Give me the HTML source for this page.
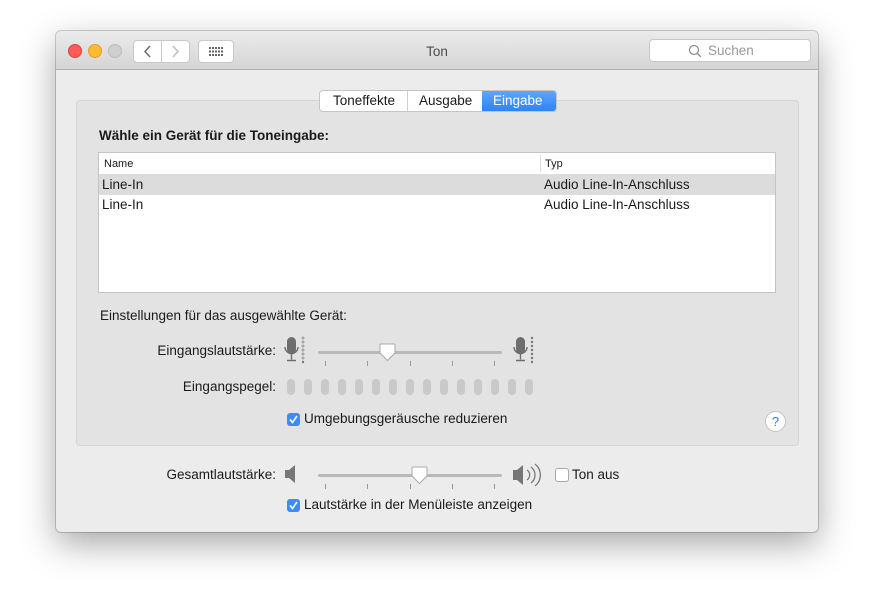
<!DOCTYPE html><html><head><style>
body{margin:0;width:874px;height:612px;background:#fff;font-family:"Liberation Sans",sans-serif;font-size:13.5px;color:#1a1a1a;position:relative;overflow:hidden}
.a{position:absolute}
.r{position:absolute;text-align:right;width:200px}
.win{left:56px;top:31px;width:762px;height:501px;background:#ececec;border-radius:5px;box-shadow:0 12px 35px rgba(0,0,0,.35),0 0 0 1px rgba(0,0,0,.18)}
.tb{left:0;top:0;width:762px;height:38px;background:linear-gradient(#ebebeb,#d5d5d5);border-bottom:1px solid #b1b1b1;border-radius:5px 5px 0 0}
.dot{width:12px;height:12px;border-radius:50%;top:13px}
.btn{background:#fff;border:1px solid #c8c8c8;border-radius:4px;height:21px;top:9px}
.group{left:20px;top:69px;width:721px;height:344px;background:#e3e3e3;border:1px solid #d5d5d5;border-radius:4px}
.pill{width:8px;height:16px;border-radius:4px;background:#c9c9c9;top:379px}
.track{height:3px;background:#b9b9b9;border-radius:2px}
.tick{width:1px;height:5px;background:#999}
.cb{width:13px;height:13px;border-radius:3px;background:#3d8cf5}
</style></head><body>
<div class="a win">
 <div class="a tb">
  <div class="a dot" style="left:12px;background:#fc5b57;border:0.5px solid #de4640"></div>
  <div class="a dot" style="left:32px;background:#fdbb2f;border:0.5px solid #de9f2a"></div>
  <div class="a dot" style="left:52px;background:#cfcfcf;border:0.5px solid #bcbcbc"></div>
  <div class="a btn" style="left:77px;width:27px;border-radius:4px 0 0 4px"><svg width="27" height="21"><path d="M16 5l-5 5.5 5 5.5" fill="none" stroke="#666" stroke-width="1.4"/></svg></div>
  <div class="a btn" style="left:105px;width:27px;border-radius:0 4px 4px 0"><svg width="27" height="21"><path d="M11 5l5 5.5-5 5.5" fill="none" stroke="#bbb" stroke-width="1.4"/></svg></div>
  <div class="a btn" style="left:142px;width:34px"><svg width="34" height="21"><g fill="#666"><rect x="10" y="6" width="2" height="2"/><rect x="13" y="6" width="2" height="2"/><rect x="16" y="6" width="2" height="2"/><rect x="19" y="6" width="2" height="2"/><rect x="22" y="6" width="2" height="2"/><rect x="10" y="9.5" width="2" height="2"/><rect x="13" y="9.5" width="2" height="2"/><rect x="16" y="9.5" width="2" height="2"/><rect x="19" y="9.5" width="2" height="2"/><rect x="22" y="9.5" width="2" height="2"/><rect x="10" y="13" width="2" height="2"/><rect x="13" y="13" width="2" height="2"/><rect x="16" y="13" width="2" height="2"/><rect x="19" y="13" width="2" height="2"/><rect x="22" y="13" width="2" height="2"/></g></svg></div>
  <div class="a" style="left:0;width:762px;top:13px;text-align:center;color:#4d4d4d">Ton</div>
  <div class="a btn" style="left:593px;width:160px;height:21px;top:8px;color:#999"><svg class="a" style="left:38px;top:4px" width="14" height="14"><circle cx="6" cy="6" r="4.5" fill="none" stroke="#888" stroke-width="1.2"/><path d="M9.3 9.3l3.5 3.5" stroke="#888" stroke-width="1.3"/></svg><span class="a" style="left:58px;top:3px">Suchen</span></div>
 </div>
 <div class="a group"></div>
 <div class="a" style="left:263px;top:59px;width:236px;height:20px;background:#fff;border:1px solid #c5c5c5;border-radius:4px;overflow:hidden">
  <span class="a" style="left:13px;top:2px">Toneffekte</span>
  <div class="a" style="left:87px;top:0;width:1px;height:20px;background:#d0d0d0"></div>
  <span class="a" style="left:99px;top:2px">Ausgabe</span>
  <div class="a" style="left:162px;top:0;width:74px;height:20px;background:linear-gradient(#5ea6fb,#2f83f6);color:#fff"><span class="a" style="left:11px;top:2px">Eingabe</span></div>
 </div>
 <div class="a" style="left:43px;top:97px;font-weight:bold">Wähle ein Gerät für die Toneingabe:</div>
 <div class="a" style="left:42px;top:121px;width:676px;height:139px;background:#fff;border:1px solid #c4c4c4">
  <div class="a" style="left:0;top:0;width:676px;height:21px;border-bottom:1px solid #dcdcdc;font-size:11px"><span class="a" style="left:5px;top:5px">Name</span><div class="a" style="left:441px;top:2px;width:1px;height:17px;background:#dcdcdc"></div><span class="a" style="left:446px;top:5px">Typ</span></div>
  <div class="a" style="left:0;top:22px;width:676px;height:20px;background:#dcdcdc"><span class="a" style="left:3px;top:2px">Line-In</span><span class="a" style="left:445px;top:2px">Audio Line-In-Anschluss</span></div>
  <div class="a" style="left:0;top:42px;width:676px;height:20px"><span class="a" style="left:3px;top:2px">Line-In</span><span class="a" style="left:445px;top:2px">Audio Line-In-Anschluss</span></div>
 </div>
</div>
<div class="a" style="left:100px;top:308px">Einstellungen für das ausgewählte Gerät:</div>
<div class="r" style="left:76px;top:343px">Eingangslautstärke:</div>
<div class="r" style="left:76px;top:379px">Eingangspegel:</div>
<svg class="a" style="left:282px;top:335px" width="260" height="32">
 <rect x="5" y="2" width="9" height="17" rx="4.5" fill="#6e6e6e"/><path d="M3 12a6.5 6.5 0 0 0 13 0M9.5 18.5v6M5 25.5h9" fill="none" stroke="#6e6e6e" stroke-width="1.4"/>
 <g fill="none" stroke="#8a8a8a" stroke-width=".8"><circle cx="21" cy="3" r="1"/><circle cx="21" cy="7" r="1"/><circle cx="21" cy="11" r="1"/><circle cx="21" cy="15" r="1"/><circle cx="21" cy="19" r="1"/><circle cx="21" cy="23" r="1"/></g><circle cx="21" cy="27" r="1.2" fill="#777"/>
 <rect x="234" y="2" width="9" height="17" rx="4.5" fill="#6e6e6e"/><path d="M232 12a6.5 6.5 0 0 0 13 0M238.5 18.5v6M234 25.5h9" fill="none" stroke="#6e6e6e" stroke-width="1.4"/>
 <g fill="#777"><circle cx="250" cy="3" r="1.2"/><circle cx="250" cy="7" r="1.2"/><circle cx="250" cy="11" r="1.2"/><circle cx="250" cy="15" r="1.2"/><circle cx="250" cy="19" r="1.2"/><circle cx="250" cy="23" r="1.2"/><circle cx="250" cy="27" r="1.2"/></g>
</svg>
<div class="a track" style="left:318px;top:351px;width:184px"></div>
<div class="a tick" style="left:325px;top:361px"></div><div class="a tick" style="left:367px;top:361px"></div><div class="a tick" style="left:410px;top:361px"></div><div class="a tick" style="left:452px;top:361px"></div><div class="a tick" style="left:494px;top:361px"></div>
<svg class="a" style="left:379px;top:343px" width="17" height="19"><path d="M2 1h13a1 1 0 0 1 1 1v8l-7.5 7.5L1 10V2a1 1 0 0 1 1-1z" fill="#fff" stroke="#aaa"/></svg>
<div class="a pill" style="left:287px"></div><div class="a pill" style="left:304px"></div><div class="a pill" style="left:321px"></div><div class="a pill" style="left:338px"></div><div class="a pill" style="left:355px"></div><div class="a pill" style="left:372px"></div><div class="a pill" style="left:389px"></div><div class="a pill" style="left:406px"></div><div class="a pill" style="left:423px"></div><div class="a pill" style="left:440px"></div><div class="a pill" style="left:457px"></div><div class="a pill" style="left:474px"></div><div class="a pill" style="left:491px"></div><div class="a pill" style="left:508px"></div><div class="a pill" style="left:525px"></div>
<div class="a cb" style="left:287px;top:413px"><svg width="13" height="13"><path d="M3 6.5l2.5 3L10 3" fill="none" stroke="#fff" stroke-width="1.6"/></svg></div>
<div class="a" style="left:304px;top:411px">Umgebungsgeräusche reduzieren</div>
<div class="a" style="left:765px;top:411px;width:19px;height:19px;border-radius:50%;background:#fff;border:1px solid #c3c3c3;color:#3478f6;text-align:center;line-height:19px;font-size:13px">?</div>
<div class="r" style="left:76px;top:467px">Gesamtlautstärke:</div>
<svg class="a" style="left:284px;top:463px" width="14" height="22"><path d="M1 7h4l6-5v18l-6-5H1z" fill="#777"/></svg>
<div class="a track" style="left:318px;top:474px;width:184px"></div>
<div class="a tick" style="left:325px;top:484px"></div><div class="a tick" style="left:367px;top:484px"></div><div class="a tick" style="left:410px;top:484px"></div><div class="a tick" style="left:452px;top:484px"></div><div class="a tick" style="left:494px;top:484px"></div>
<svg class="a" style="left:411px;top:466px" width="17" height="19"><path d="M2 1h13a1 1 0 0 1 1 1v8l-7.5 7.5L1 10V2a1 1 0 0 1 1-1z" fill="#fff" stroke="#aaa"/></svg>
<svg class="a" style="left:512px;top:461px" width="34" height="28"><path d="M1 9h4l6-5v20l-6-5H1z" fill="#777"/><path d="M15 9a6 6 0 0 1 0 10M19 6a10 10 0 0 1 0 16M23 3a14 14 0 0 1 0 22" fill="none" stroke="#777" stroke-width="1.3"/></svg>
<div class="a" style="left:555px;top:468px;width:12px;height:12px;border:1px solid #aaa;border-radius:3px;background:#fff"></div>
<div class="a" style="left:572px;top:467px">Ton aus</div>
<div class="a cb" style="left:287px;top:499px"><svg width="13" height="13"><path d="M3 6.5l2.5 3L10 3" fill="none" stroke="#fff" stroke-width="1.6"/></svg></div>
<div class="a" style="left:304px;top:497px">Lautstärke in der Menüleiste anzeigen</div>
</body></html>
